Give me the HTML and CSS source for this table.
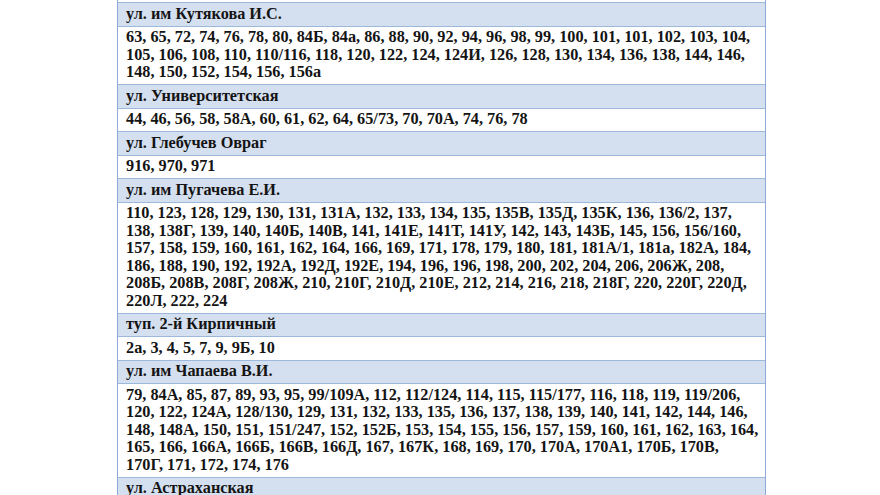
FILE: index.html
```html
<!DOCTYPE html>
<html lang="ru">
<head>
<meta charset="utf-8">
<link rel="stylesheet" href="styles.css">
</head>
<body>
<div class="page">
  <div class="table">
    <div class="row data stub"></div>
    <div class="row head">ул. им Кутякова И.С.</div>
    <div class="row data">63, 65, 72, 74, 76, 78, 80, 84Б, 84а, 86, 88, 90, 92, 94, 96, 98, 99, 100, 101, 101, 102, 103, 104,<br>105, 106, 108, 110, 110/116, 118, 120, 122, 124, 124И, 126, 128, 130, 134, 136, 138, 144, 146,<br>148, 150, 152, 154, 156, 156а</div>
    <div class="row head">ул. Университетская</div>
    <div class="row data">44, 46, 56, 58, 58А, 60, 61, 62, 64, 65/73, 70, 70А, 74, 76, 78</div>
    <div class="row head">ул. Глебучев Овраг</div>
    <div class="row data">916, 970, 971</div>
    <div class="row head">ул. им Пугачева Е.И.</div>
    <div class="row data">110, 123, 128, 129, 130, 131, 131А, 132, 133, 134, 135, 135В, 135Д, 135К, 136, 136/2, 137,<br>138, 138Г, 139, 140, 140Б, 140В, 141, 141Е, 141Т, 141У, 142, 143, 143Б, 145, 156, 156/160,<br>157, 158, 159, 160, 161, 162, 164, 166, 169, 171, 178, 179, 180, 181, 181А/1, 181а, 182А, 184,<br>186, 188, 190, 192, 192А, 192Д, 192Е, 194, 196, 196, 198, 200, 202, 204, 206, 206Ж, 208,<br>208Б, 208В, 208Г, 208Ж, 210, 210Г, 210Д, 210Е, 212, 214, 216, 218, 218Г, 220, 220Г, 220Д,<br>220Л, 222, 224</div>
    <div class="row head">туп. 2-й Кирпичный</div>
    <div class="row data">2а, 3, 4, 5, 7, 9, 9Б, 10</div>
    <div class="row head">ул. им Чапаева В.И.</div>
    <div class="row data">79, 84А, 85, 87, 89, 93, 95, 99/109А, 112, 112/124, 114, 115, 115/177, 116, 118, 119, 119/206,<br>120, 122, 124А, 128/130, 129, 131, 132, 133, 135, 136, 137, 138, 139, 140, 141, 142, 144, 146,<br>148, 148А, 150, 151, 151/247, 152, 152Б, 153, 154, 155, 156, 157, 159, 160, 161, 162, 163, 164,<br>165, 166, 166А, 166Б, 166В, 166Д, 167, 167К, 168, 169, 170, 170А, 170А1, 170Б, 170В,<br>170Г, 171, 172, 174, 176</div>
    <div class="row head">ул. Астраханская</div>
  </div>
</div>
</body>
</html>
```

FILE: styles.css
```css
html, body {
  margin: 0;
  padding: 0;
  background: #ffffff;
}
.page {
  padding-left: 117px;
  height: 495px;
  overflow: hidden;
}
.table {
  width: 649px;
  box-sizing: border-box;
  display: flex;
  flex-direction: column;
  border-left: 1px solid #8eaad6;
  border-right: 1px solid #8eaad6;
  font-family: "Liberation Serif", "Times New Roman", serif;
  font-weight: bold;
  font-size: 16.25px;
  line-height: 17.5px;
  color: #141414;
}
.row {
  padding: 2.5px 7px 2.5px 8px;
  border-bottom: 1px solid #9cb8db;
  white-space: nowrap;
}
.head {
  background: #d4e0f0;
}
.data {
  background: #ffffff;
}
.stub {
  height: 2px;
  padding: 0;
}
```
